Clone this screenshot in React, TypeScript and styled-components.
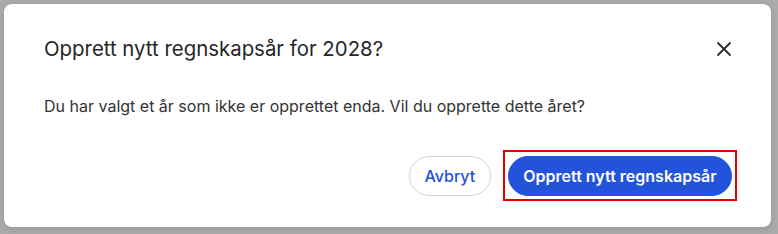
import React from 'react';
import styled, { createGlobalStyle } from 'styled-components';

const GlobalStyle = createGlobalStyle`
   * {
      box-sizing: border-box;
   }
   html,
   body {
      margin: 0;
      padding: 0;
      background: #ababab;
      font-family: Inter, 'Noto Sans', sans-serif;
   }
`;

const Backdrop = styled.div`
   width: 778px;
   height: 234px;
   padding: 4px 7px 7px 4px;
   background: #ababab;
`;

const Dialog = styled.section`
   display: flex;
   flex-direction: column;
   height: 223px;
   padding: 29px 39px 26px 40px;
   background: #ffffff;
   border-radius: 8px;
   box-shadow: 0 2px 8px rgba(0, 0, 0, 0.12);
`;

const Header = styled.header`
   display: flex;
   justify-content: space-between;
   align-items: center;
   height: 28px;
   margin-top: 2px;
`;

const Title = styled.h2`
   margin: 0;
   font-size: 20.4px;
   line-height: 28px;
   font-weight: 400;
   color: #262626;
`;

const CloseButton = styled.button`
   display: flex;
   align-items: center;
   justify-content: center;
   width: 24px;
   height: 24px;
   margin-right: -4px;
   padding: 0;
   border: none;
   background: none;
   color: #2b2b2b;
   cursor: pointer;
`;

const Message = styled.p`
   margin: 31px 0 0;
   font-size: 16px;
   line-height: 24px;
   color: #333333;
`;

const Footer = styled.footer`
   display: flex;
   justify-content: flex-end;
   align-items: center;
   gap: 12px;
   margin-top: auto;
   margin-right: -5px;
`;

const Highlight = styled.span`
   display: flex;
   padding: 4px 3px 3px;
   border: 2px solid #e00000;
`;

const Button = styled.button<{ $primary?: boolean }>`
   height: 40px;
   padding: 0 ${({ $primary }) => ($primary ? 14.5 : 14.5)}px;
   border-radius: 20px;
   font-family: inherit;
   font-size: 16px;
   font-weight: ${({ $primary }) => ($primary ? 600 : 500)};
   color: ${({ $primary }) => ($primary ? '#ffffff' : '#2450d8')};
   background: ${({ $primary }) => ($primary ? '#2352db' : '#ffffff')};
   border: 1px solid ${({ $primary }) => ($primary ? '#2352db' : '#d4d4d4')};
   cursor: pointer;
`;

const CloseIcon = () => (
   <svg width="16" height="16" viewBox="0 0 16 16" fill="none">
      <path
         d="M2 2L14 14M14 2L2 14"
         stroke="currentColor"
         strokeWidth="1.8"
         strokeLinecap="round"
      />
   </svg>
);

const App: React.FC = () => (
   <>
      <GlobalStyle />
      <Backdrop>
         <Dialog role="dialog" aria-modal>
            <Header>
               <Title>Opprett nytt regnskapsår for 2028?</Title>
               <CloseButton aria-label="Lukk">
                  <CloseIcon />
               </CloseButton>
            </Header>
            <Message>
               Du har valgt et år som ikke er opprettet enda. Vil du opprette
               dette året?
            </Message>
            <Footer>
               <Button>Avbryt</Button>
               <Highlight>
                  <Button $primary>Opprett nytt regnskapsår</Button>
               </Highlight>
            </Footer>
         </Dialog>
      </Backdrop>
   </>
);

export default App;
